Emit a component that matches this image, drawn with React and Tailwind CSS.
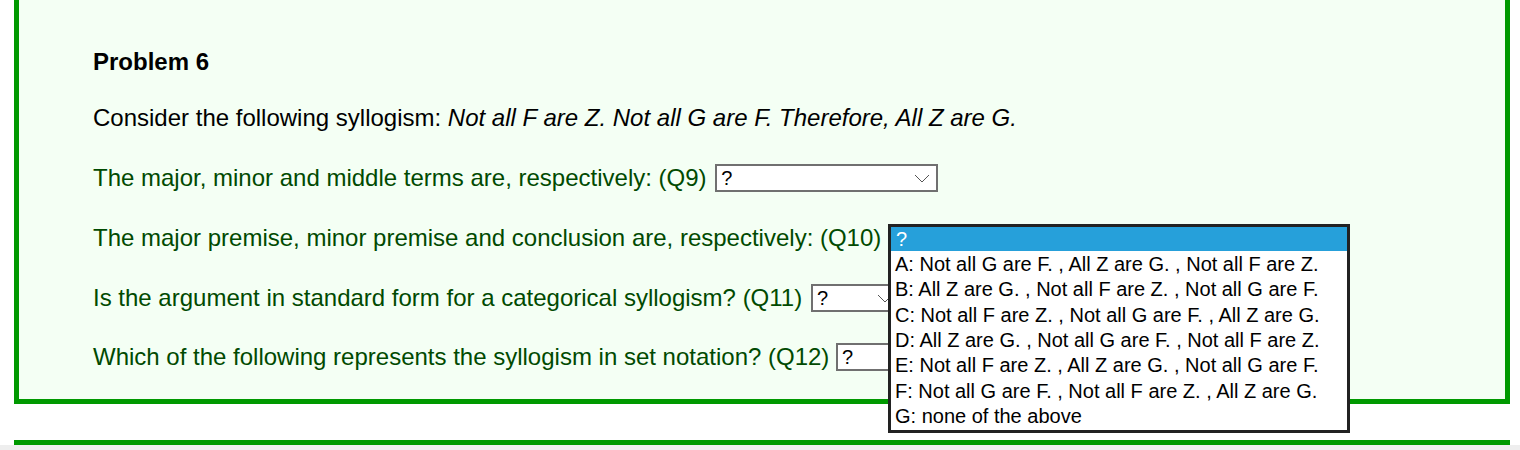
const font = { fontFamily: '"Liberation Sans", Arial, sans-serif' };

function Chevron() {
  return (
    <svg width="16" height="9" viewBox="0 0 16 9" className="shrink-0">
      <path d="M1 1 L8 8 L15 1" fill="none" stroke="#555" strokeWidth="1" />
    </svg>
  );
}

function FakeSelect({ width }) {
  return (
    <span
      className="inline-flex h-[28px] items-center justify-between border-2 border-[#707070] bg-white pl-[4px] pr-[6px] text-[20px] leading-[24px] text-black"
      style={{ width }}
    >
      <span>?</span>
      <Chevron />
    </span>
  );
}

const options = [
  "A: Not all G are F. , All Z are G. , Not all F are Z.",
  "B: All Z are G. , Not all F are Z. , Not all G are F.",
  "C: Not all F are Z. , Not all G are F. , All Z are G.",
  "D: All Z are G. , Not all G are F. , Not all F are Z.",
  "E: Not all F are Z. , All Z are G. , Not all G are F.",
  "F: Not all G are F. , Not all F are Z. , All Z are G.",
  "G: none of the above",
];

function Question({ label, width, shift = "", children, className = "" }) {
  return (
    <div className={"flex h-[28px] items-center text-[24px] leading-[28px] text-[#014a01] " + className}>
      <span className="whitespace-pre">{label} </span>
      <span className={"relative inline-flex " + shift}>
        <FakeSelect width={width} />
        {children}
      </span>
    </div>
  );
}

export default function App() {
  return (
    <div className="min-h-[450px] bg-white" style={font}>
      <div className="ml-[14px] w-[1496px] border-x-[5px] border-b-[5px] border-[#009900] bg-[#f4fff4] pb-[28px] pl-[74px] pt-[48px]">
        <div className="text-[24px] font-bold leading-[28px] text-black">Problem 6</div>
        <div className="mt-[28px] text-[24px] leading-[28px] text-black">
          Consider the following syllogism:{" "}
          <i>Not all F are Z. Not all G are F. Therefore, All Z are G.</i>
        </div>
        <Question className="mt-[32px]" shift="ml-[2px]" label="The major, minor and middle terms are, respectively: (Q9)" width={223} />
        <Question className="mt-[32px]" label="The major premise, minor premise and conclusion are, respectively: (Q10)" width={300}>
          <div className="absolute left-0 top-0 z-10 w-[462px] border-[3px] border-[#222] bg-white pb-[2px] text-[20px] leading-[25px] text-black">
            <div className="h-[24px] bg-[#26a0da] pl-[5px] leading-[24px] text-white">?</div>
            {options.map((o) => (
              <div key={o} className="h-[25.33px] whitespace-nowrap pl-[4px] pt-[1px] leading-[25.33px]">
                {o}
              </div>
            ))}
          </div>
        </Question>
        <Question className="mt-[32px]" shift="ml-[2px]" label="Is the argument in standard form for a categorical syllogism? (Q11)" width={90} />
        <Question className="mt-[31px]" label="Which of the following represents the syllogism in set notation? (Q12)" width={200} />
      </div>
      <div className="ml-[14px] mt-[36px] h-[5px] w-[1496px] bg-[#009900]" />
      <div className="h-[20px] bg-[#eeeeee]" />
    </div>
  );
}
